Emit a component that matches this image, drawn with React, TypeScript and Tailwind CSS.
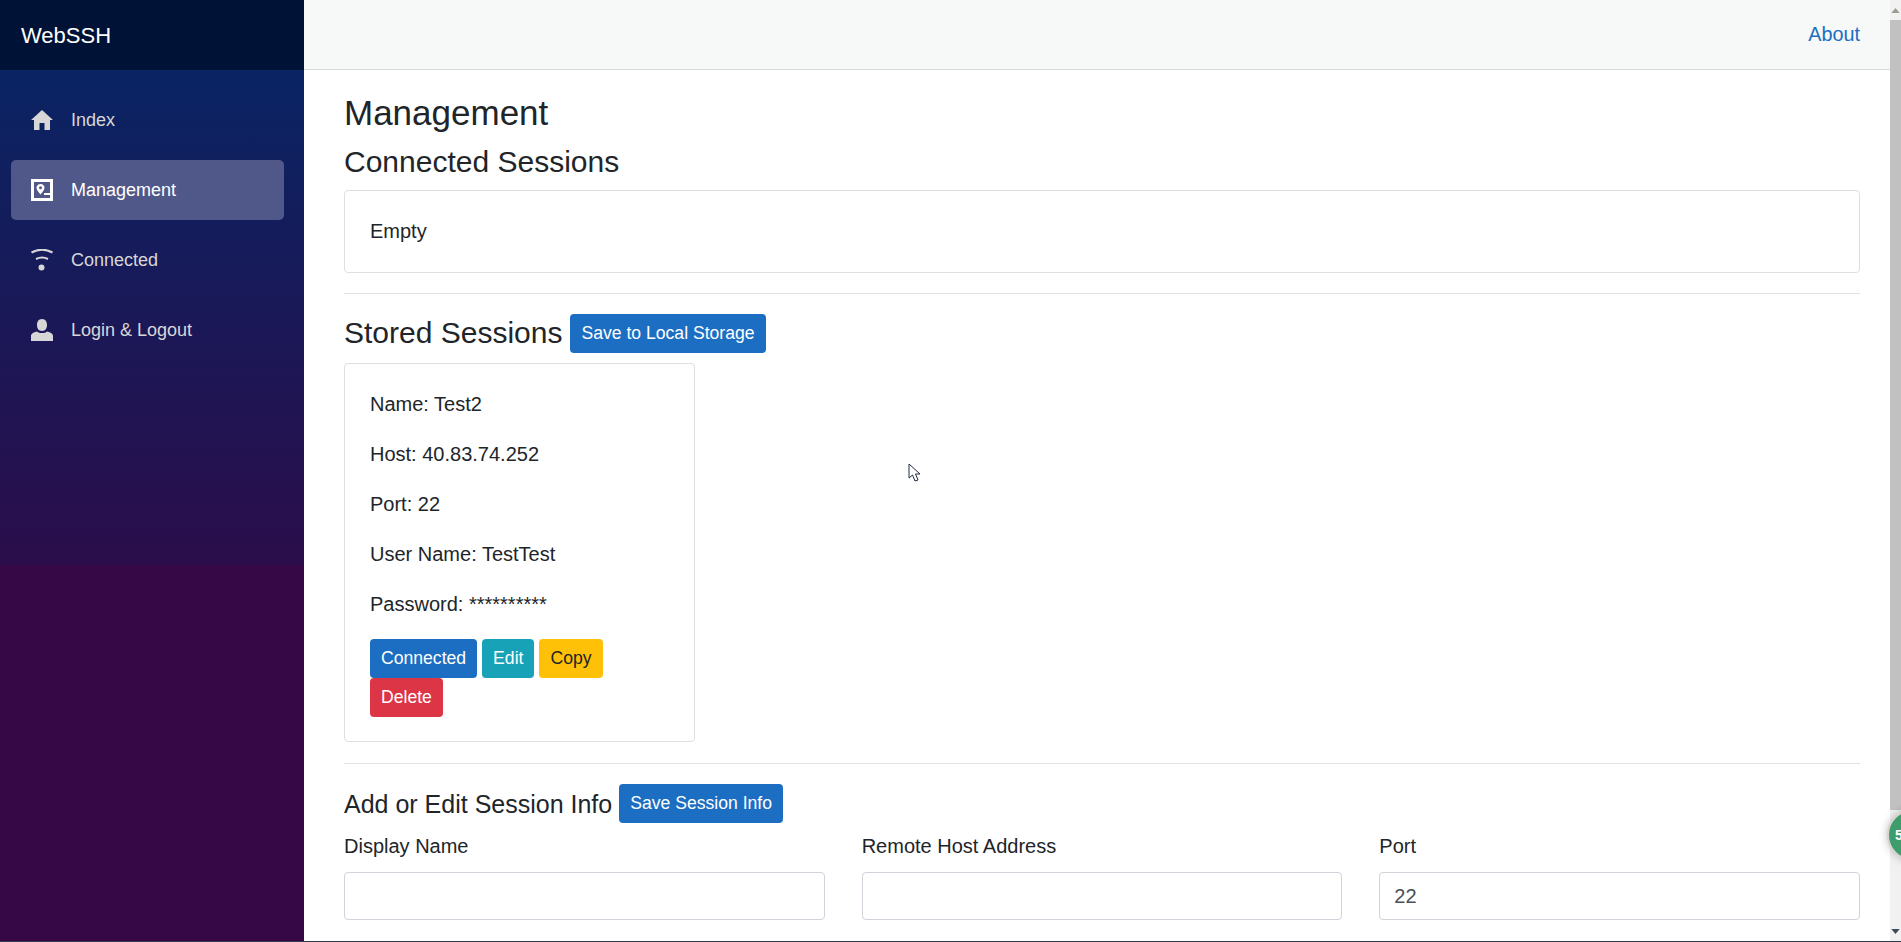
const navItems = [
  { label: "Index", icon: "home" },
  { label: "Management", icon: "manage", active: true },
  { label: "Connected", icon: "wifi" },
  { label: "Login & Logout", icon: "user" },
];

const NavIcon = ({ name }: { name: string }) => {
  if (name === "home") {
    return (
      <svg viewBox="0 0 22 20" className="h-[20px] w-[22px] fill-current">
        <path d="M11 0 L22 10 H19 V20 H13.5 V13 H8.5 V20 H3 V10 H0 Z" />
      </svg>
    );
  }
  if (name === "manage") {
    return (
      <svg viewBox="0 0 22 22" className="h-[22px] w-[22px] fill-current">
        <path
          fillRule="evenodd"
          d="M0 0 H22 V22 H0 Z M3 3 V19 H19 V16 H13 V14 H19 V3 Z M9.5 5 C12 5 13.5 6.8 13.5 8.8 C13.5 11 11 14 9.5 15.5 C8 14 5.5 11 5.5 8.8 C5.5 6.8 7 5 9.5 5 Z M9.5 7.3 A1.5 1.5 0 1 0 9.5 10.3 A1.5 1.5 0 1 0 9.5 7.3 Z"
        />
      </svg>
    );
  }
  if (name === "wifi") {
    return (
      <svg viewBox="0 0 22 22" className="h-[22px] w-[22px]">
        <path d="M0.5 3.5 C7 0 15 0 21.5 3.5" fill="none" stroke="currentColor" strokeWidth="2" />
        <path d="M5 10 C9 8 13 8 17 10" fill="none" stroke="currentColor" strokeWidth="2" />
        <circle cx="10.5" cy="18.5" r="3" fill="currentColor" />
      </svg>
    );
  }
  return (
    <svg viewBox="0 0 22 22" className="h-[22px] w-[22px] fill-current">
      <path d="M11 0 C14.5 0 16 2.8 16 6 C16 9 14.5 12 11 12 C7.5 12 6 9 6 6 C6 2.8 7.5 0 11 0 Z M6 12.5 C8 14.5 14 14.5 16 12.5 C19 13.2 22 14.5 22 17 V22 H0 V17 C0 14.5 3 13.2 6 12.5 Z" />
    </svg>
  );
};

const Button = ({ color, children }: { color: string; children: string }) => (
  <button type="button" className={`h-[39px] rounded-[4px] px-[11px] text-[17.6px] leading-[39px] whitespace-nowrap ${color}`}>
    {children}
  </button>
);

const Field = ({ label, value }: { label: string; value?: string }) => (
  <div className="flex-1">
    <label className="block h-[29px] text-[20px] leading-[29px]">{label}</label>
    <input
      readOnly
      value={value ?? ""}
      className="mt-[11px] block h-[48px] w-full rounded-[4px] border border-[#ced4da] px-[14px] text-[20px] text-[#495057]"
    />
  </div>
);

const App = () => {
  return (
    <div className="flex h-[942px] w-full overflow-hidden bg-white font-['Liberation_Sans',Arial,sans-serif] text-[#212529]">
      <aside className="w-[304px] shrink-0 bg-[linear-gradient(180deg,#052767_0,#2b0d4b_565px,#360845_565px)]">
        <div className="flex h-[70px] items-center bg-[#001336] pl-[21px] text-[22px] text-white">WebSSH</div>
        <nav className="flex flex-col gap-[10px] pl-[11px] pr-[20px] pt-[20px]">
          {navItems.map((item) => (
            <a
              key={item.label}
              className={`flex h-[60px] items-center rounded-[5px] pl-[20px] text-[18px] ${
                item.active ? "bg-[#50588a] text-white" : "text-[#d7d7d7]"
              }`}
            >
              <span className="flex w-[40px] shrink-0">
                <NavIcon name={item.icon} />
              </span>
              {item.label}
            </a>
          ))}
        </nav>
      </aside>

      <div className="flex min-w-0 flex-1 flex-col">
        <header className="flex h-[70px] shrink-0 items-center justify-end border-b border-[#d6d8d9] bg-[#f7f8f8] pr-[30px] text-[19.8px] text-[#1b6ec2]">
          About
        </header>
        <main className="min-h-0 flex-1 pl-[40px] pr-[30px] pt-[22px]">
          <h1 className="text-[35px] leading-[42px]">Management</h1>
          <h2 className="mt-[11px] text-[30px] leading-[34px]">Connected Sessions</h2>
          <div className="mt-[11px] rounded-[4px] border border-[#dfdfdf] px-[25px] pb-[29px] pt-[28px] text-[20px] leading-[24px]">
            Empty
          </div>
          <hr className="mb-[19px] mt-[20px] border-[#e2e2e2]" />
          <div className="flex h-[40px] items-center gap-[8px]">
            <h2 className="text-[30px] leading-[34px]">Stored Sessions</h2>
            <Button color="bg-[#1b6ec2] text-white">Save to Local Storage</Button>
          </div>
          <div className="mt-[10px] h-[379px] w-[351px] rounded-[4px] border border-[#dfdfdf] px-[25px] pt-[28px] text-[20px] leading-[24px]">
            <p>Name: Test2</p>
            <p className="mt-[26px]">Host: 40.83.74.252</p>
            <p className="mt-[26px]">Port: 22</p>
            <p className="mt-[26px]">User Name: TestTest</p>
            <p className="mt-[26px]">Password: **********</p>
            <div className="mt-[23px] flex flex-wrap gap-x-[5px]">
              <Button color="bg-[#1b6ec2] text-white">Connected</Button>
              <Button color="bg-[#17a2b8] text-white">Edit</Button>
              <Button color="bg-[#ffc107] text-[#212529]">Copy</Button>
              <Button color="bg-[#dc3545] text-white">Delete</Button>
            </div>
          </div>
          <hr className="mb-[20px] mt-[21px] border-[#e2e2e2]" />
          <div className="flex h-[39px] items-center gap-[7px]">
            <h3 className="text-[25px] leading-[30px]">Add or Edit Session Info</h3>
            <Button color="bg-[#1b6ec2] text-white">Save Session Info</Button>
          </div>
          <div className="mt-[9px] flex gap-[37px]">
            <Field label="Display Name" />
            <Field label="Remote Host Address" />
            <Field label="Port" value="22" />
          </div>
        </main>
      </div>

      {/* scrollbar */}
      <div className="relative flex w-[11px] shrink-0 flex-col items-center bg-[#f1f1f1]">
        <svg viewBox="0 0 10 6" className="mt-[8px] h-[5px] w-[9px] fill-[#a09a94]">
          <path d="M5 0 L10 6 H0 Z" />
        </svg>
        <div className="mt-[7px] h-[790px] w-full bg-[#c1c1c1]" />
        <div className="flex-1" />
        <svg viewBox="0 0 10 6" className="mb-[8px] h-[5px] w-[9px] fill-[#3d4a5c]">
          <path d="M0 0 H10 L5 6 Z" />
        </svg>
        <div className="absolute left-[-3px] top-[809px] flex h-[52px] w-[52px] items-center rounded-full border-[2px] border-[#d9d4d0] bg-[#3f9d6d] pl-[6px] text-[14px] font-bold text-white shadow-[0_0_8px_rgba(0,0,0,0.25)]">
          5
        </div>
      </div>

      {/* desktop edge below the window */}
      <div className="absolute bottom-0 left-0 h-[1px] w-full bg-[#2f3b4c]" />

      {/* cursor caught in the capture */}
      <svg viewBox="0 0 13 20" className="absolute left-[908px] top-[463px] h-[20px] w-[13px]">
        <path d="M1 1 V15 L4.5 12 L7 18 L10 17 L7.5 11 H12 Z" fill="white" stroke="#1f2a44" strokeWidth="1" />
      </svg>
    </div>
  );
};

export default App;
